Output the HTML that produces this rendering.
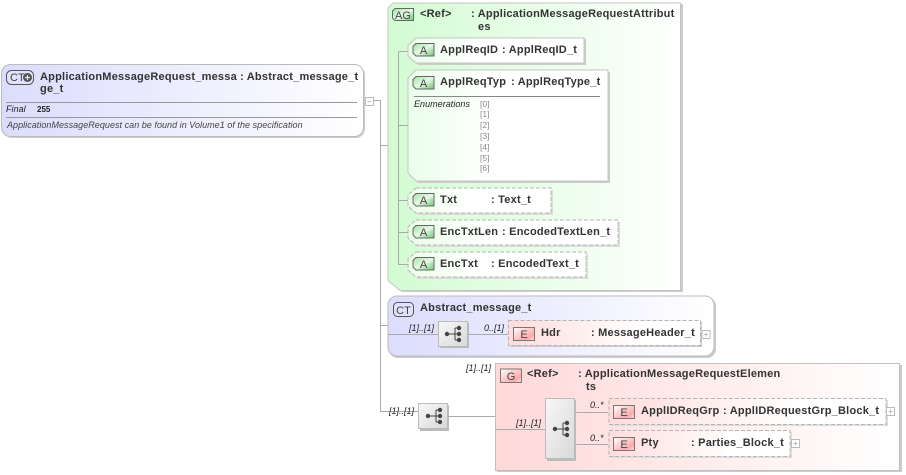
<!DOCTYPE html>
<html><head><meta charset="utf-8"><style>
html,body{margin:0;padding:0;background:#fff;width:906px;height:475px;overflow:hidden}
svg{display:block}
text{font-family:"Liberation Sans",sans-serif;fill:#333}
.b{font-size:11px;font-weight:bold;letter-spacing:.22px}
.i{font-size:9px;font-style:italic;fill:#222;letter-spacing:.04px}
.m{font-size:9px;font-style:italic;fill:#222}
.e{font-size:8.5px;fill:#888}
.t{font-size:11px;fill:#444;text-anchor:middle}
.l{stroke:#aaa;fill:none;stroke-width:1}
.dash{fill:url(#wg);stroke:#b4b4b4;stroke-dasharray:4 2;stroke-width:1}
.ds{fill:url(#wg);stroke:#c4c4c4;stroke-width:1}
</style></head><body>
<svg width="906" height="475" viewBox="0 0 906 475" xmlns="http://www.w3.org/2000/svg">
<defs>
<linearGradient id="ct" x1="0" x2="1" y1="0" y2="0"><stop offset="0" stop-color="#dcdcfd"/><stop offset="1" stop-color="#fff"/></linearGradient>
<linearGradient id="ag" x1="0" x2="1" y1="0" y2="0"><stop offset="0" stop-color="#d2fcd2"/><stop offset="1" stop-color="#fff"/></linearGradient>
<linearGradient id="g" x1="0" x2="1" y1="0" y2="0"><stop offset="0" stop-color="#ffd8d8"/><stop offset="1" stop-color="#fff"/></linearGradient>
<linearGradient id="wg" x1="0" x2="1" y1="0" y2="0"><stop offset="0" stop-color="#eafeea"/><stop offset=".4" stop-color="#fff"/></linearGradient>
<linearGradient id="rg" x1="0" x2="1" y1="0" y2="0"><stop offset="0" stop-color="#ffdcdc"/><stop offset=".7" stop-color="#fff"/></linearGradient>
<linearGradient id="ba" x1="0" x2="1" y1="0" y2="1"><stop offset="0" stop-color="#9fe09f"/><stop offset=".5" stop-color="#e6fae6"/><stop offset="1" stop-color="#6fc46f"/></linearGradient>
<linearGradient id="be" x1="0" x2="1" y1="0" y2="1"><stop offset="0" stop-color="#fff"/><stop offset=".75" stop-color="#fbaaaa"/><stop offset="1" stop-color="#fde0e0"/></linearGradient>
<linearGradient id="seq" x1="0" x2="1" y1="0" y2="1"><stop offset="0" stop-color="#f8f8f8"/><stop offset="1" stop-color="#d8d8d8"/></linearGradient>
<g id="seqi" fill="#444" stroke="none">
<circle cx="-11" cy="0" r="2.2"/><circle cx="1" cy="-6" r="2.2"/><circle cx="1" cy="0" r="2.2"/><circle cx="1" cy="6" r="2.2"/>
<path d="M-11 0H-3M-3-6V6M-3-6H1M-3 0H1M-3 6H1" stroke="#444" stroke-width="1" fill="none"/>
</g>
<g id="plus"><rect x=".5" y=".5" width="8" height="8" fill="#fff" stroke="#bbb"/><path d="M2.500 4.500H6.500M4.500 2.500V6.500" stroke="#bbb"/></g>
<g id="A"><path d="M3.500 .5H21.500V13H3.500L.5 10V3.500Z" fill="url(#ba)" stroke="#666"/><text x="11" y="11" class="t">A</text></g>
<g id="E"><rect x=".5" y=".5" width="21" height="13" fill="url(#be)" stroke="#777"/><text x="11" y="11" class="t">E</text></g>
</defs>

<!-- connectors -->
<path class="l" d="M374 100.500H380.500V411.500H418M380 145.500H388M380 325.500H388"/>

<!-- main CT box -->
<rect x="3" y="66" width="362" height="72" rx="9" fill="#ccc"/>
<rect x="1.500" y="64.500" width="362" height="72" rx="9" fill="url(#ct)" stroke="#bbb"/>
<rect x="6.500" y="70.500" width="27" height="14" rx="5" fill="#e2e2fc" stroke="#555"/>
<text x="10" y="81" style="font-size:11px;fill:#444">CT</text>
<circle cx="27.500" cy="77.500" r="4.500" fill="#555"/><path d="M25 77.500H30M27.500 75V80" stroke="#e8e8e8" stroke-width="1.200"/>
<text x="40" y="80" class="b">ApplicationMessageRequest_messa</text>
<text x="240" y="80" class="b">: Abstract_message_t</text>
<text x="40" y="92" class="b">ge_t</text>
<path d="M6 102.500H357M6 117.500H357" stroke="#999"/>
<text x="6" y="112" class="i">Final</text>
<text x="37" y="112" style="font-size:8px;font-weight:bold;fill:#222">255</text>
<text x="7" y="128" class="i" style="fill:#444">ApplicationMessageRequest can be found in Volume1 of the specification</text>
<g><rect x="365.500" y="97.500" width="8" height="8" fill="#fff" stroke="#bbb"/><path d="M367.500 101.500H371.500" stroke="#bbb"/></g>

<!-- AG box -->
<path d="M390 7L395 4H683V292H402L390 282Z" fill="#ccc"/>
<path d="M388 8L393 3H680.500V290.500H400L388 280.500Z" fill="url(#ag)" stroke="#c4c4c4"/>
<path d="M395 8.500H413.500V20.500H395L392.500 18V11Z" fill="url(#ba)" stroke="#666"/>
<text x="403" y="19" class="t">AG</text>
<text x="420" y="17" class="b">&lt;Ref&gt;</text>
<text x="471" y="17" class="b">: ApplicationMessageRequestAttribut</text>
<text x="478" y="30" class="b">es</text>
<path class="l" d="M398.500 51.500V264.500H410M398.500 51.500H410M398 125.500H408M398 200.500H410M398 232.500H410"/>

<!-- ApplReqID -->
<path d="M418 39H586V65H418L409 58V46Z" fill="#ccc"/>
<path d="M416 38H584V63H416L408 56V45Z" class="ds"/>
<use href="#A" x="412.500" y="43"/>
<text x="440" y="53" class="b">ApplReqID</text><text x="502" y="53" class="b">: ApplReqID_t</text>
<!-- ApplReqTyp -->
<path d="M418 72H610V183H418L409 175V80Z" fill="#ccc"/>
<path d="M416 70H608V181H416L408 173V78Z" class="ds"/>
<use href="#A" x="412.500" y="76"/>
<text x="440" y="85" class="b">ApplReqTyp</text><text x="511" y="85" class="b">: ApplReqType_t</text>
<path d="M414 96.500H600" stroke="#888"/>
<text x="414" y="107" class="i">Enumerations</text>
<text x="480" y="107" class="e">[0]</text><text x="480" y="117" class="e">[1]</text><text x="480" y="128" class="e">[2]</text><text x="480" y="139" class="e">[3]</text><text x="480" y="150" class="e">[4]</text><text x="480" y="161" class="e">[5]</text><text x="480" y="171" class="e">[6]</text>
<!-- Txt -->
<path d="M418 190H553V215H418L409 208V197Z" fill="#ddd"/>
<path d="M416 188H551V213H416L408 206V195Z" class="dash"/>
<use href="#A" x="412.500" y="193"/>
<text x="440" y="203" class="b">Txt</text><text x="491" y="203" class="b">: Text_t</text>
<!-- EncTxtLen -->
<path d="M418 222H620V247H418L409 240V229Z" fill="#ddd"/>
<path d="M416 220H618V245H416L408 238V227Z" class="dash"/>
<use href="#A" x="412.500" y="225"/>
<text x="440" y="235" class="b">EncTxtLen</text><text x="502" y="235" class="b">: EncodedTextLen_t</text>
<!-- EncTxt -->
<path d="M418 254H588V279H418L409 272V261Z" fill="#ddd"/>
<path d="M416 252H586V277H416L408 270V259Z" class="dash"/>
<use href="#A" x="412.500" y="257"/>
<text x="440" y="267" class="b">EncTxt</text><text x="491" y="267" class="b">: EncodedText_t</text>

<!-- Abstract CT -->
<rect x="389" y="297" width="327" height="61" rx="9" fill="#ccc"/>
<rect x="388" y="296" width="326" height="60" rx="9" fill="url(#ct)" stroke="#bbb"/>
<rect x="393.500" y="302.500" width="20" height="14" rx="4" fill="#e2e2fc" stroke="#555"/>
<text x="403.500" y="314" class="t">CT</text>
<text x="420" y="311" class="b">Abstract_message_t</text>
<path class="l" d="M388 334.500H438M468 334.500H508"/>
<text x="409" y="331" class="m">[1]..[1]</text>
<rect x="440" y="323" width="29" height="25" fill="#bbb"/>
<rect x="438.500" y="321.500" width="29" height="25" fill="url(#seq)" stroke="#bbb"/>
<use href="#seqi" x="458" y="334"/>
<text x="484" y="331" class="m">0..[1]</text>
<rect x="510" y="322" width="192" height="25" fill="#ccc"/>
<rect x="508.500" y="320.500" width="192" height="25" fill="url(#rg)" stroke="#b4b4b4" stroke-dasharray="4 2"/>
<use href="#E" x="513" y="327"/>
<text x="541" y="336" class="b">Hdr</text><text x="591" y="336" class="b">: MessageHeader_t</text>
<use href="#plus" x="701.500" y="330"/>

<!-- second sequence -->
<text x="389" y="414" class="m">[1]..[1]</text>
<rect x="420" y="405" width="29" height="26" fill="#bbb"/>
<rect x="418.500" y="403.500" width="29" height="25" fill="url(#seq)" stroke="#bbb"/>
<use href="#seqi" x="439" y="416"/>
<path class="l" d="M448 416.500H495"/>

<!-- G box -->
<text x="466" y="371" class="m">[1]..[1]</text>
<rect x="497" y="365" width="405" height="107" fill="#ccc"/>
<rect x="495.500" y="363.500" width="404" height="107" fill="url(#g)" stroke="#c0c0c0"/>
<rect x="500.500" y="369" width="21" height="13.500" fill="url(#be)" stroke="#777"/>
<text x="511" y="380" class="t">G</text>
<text x="527" y="377" class="b">&lt;Ref&gt;</text>
<text x="578" y="377" class="b">: ApplicationMessageRequestElemen</text>
<text x="586" y="390" class="b">ts</text>
<path class="l" d="M495 429.500H545M575 412.500H608M575 444.500H608"/>
<text x="516" y="426" class="m">[1]..[1]</text>
<rect x="547" y="400" width="29" height="61" fill="#bbb"/>
<rect x="545.500" y="398.500" width="29" height="60" fill="url(#seq)" stroke="#bbb"/>
<use href="#seqi" x="566" y="429"/>
<text x="590" y="408" class="m">0..*</text>
<text x="590" y="441" class="m">0..*</text>
<rect x="611" y="400" width="277" height="26" fill="#ddd"/>
<rect x="609" y="398.500" width="277" height="26" fill="url(#rg)" stroke="#b4b4b4" stroke-dasharray="4 2"/>
<use href="#E" x="613" y="405"/>
<text x="641" y="414" class="b">ApplIDReqGrp</text><text x="723" y="414" class="b">: ApplIDRequestGrp_Block_t</text>
<use href="#plus" x="886" y="407"/>
<rect x="611" y="432" width="181" height="26" fill="#ddd"/>
<rect x="609" y="430.500" width="181" height="26" fill="url(#rg)" stroke="#b4b4b4" stroke-dasharray="4 2"/>
<use href="#E" x="613" y="437"/>
<text x="641" y="446" class="b">Pty</text><text x="691" y="446" class="b">: Parties_Block_t</text>
<use href="#plus" x="791" y="439"/>
</svg>
</body></html>
